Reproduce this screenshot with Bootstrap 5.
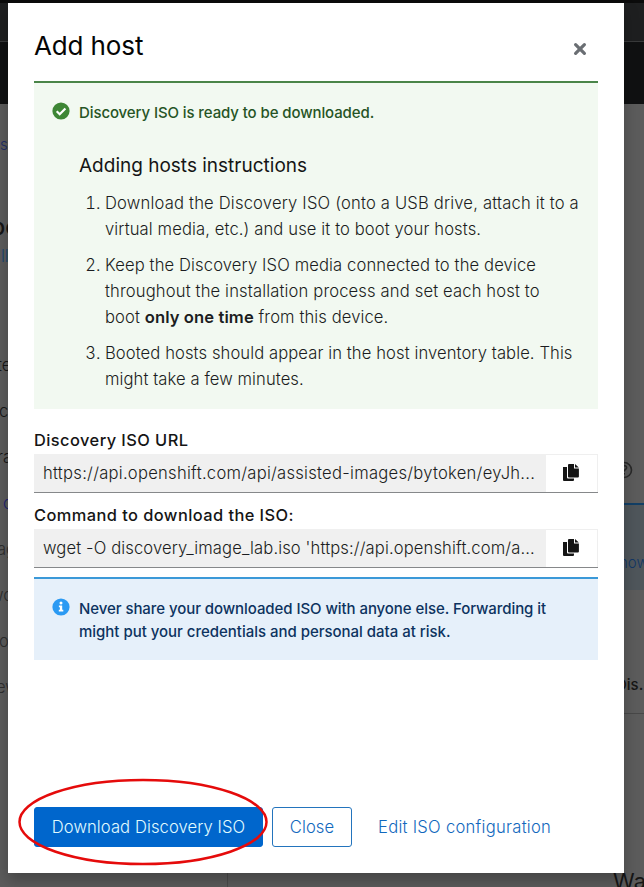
<!DOCTYPE html>
<html lang="en">
<head>
<meta charset="utf-8">
<meta name="viewport" content="width=device-width, initial-scale=1">
<title>Add host</title>
<link href="https://cdn.jsdelivr.net/npm/bootstrap@5.3.0/dist/css/bootstrap.min.css" rel="stylesheet">
<style>
body{font-family:Inter,"Liberation Sans",sans-serif;font-size:16.6px;line-height:26px;font-weight:350;color:#1b1d21;background:#5c5c5c;width:644px;height:887px;overflow:hidden}
.page{height:887px;color:#161616}
.masthead{height:104px;background:#101112;border-top:3px solid #0b0b0b}
.masthead-bar{height:39px;background:#1e1f20;border-bottom:1px solid #393a3b}
.page-body{height:769px}
.rail{width:24px;overflow:hidden;white-space:nowrap}
.rail div{height:46px;line-height:46px;margin-left:-3px}
.rail .crumb{margin-top:18px;font-size:15px;margin-left:0;color:#1d2c66}
.rail .heading{margin-top:36px;font-size:23px;font-weight:550;margin-left:-9px}
.rail .tab-link{height:26px;line-height:26px;margin:-7px 0 73px 1px;color:#174672}
.rail .single{margin-left:-1px}
.rail .entry-link{margin-left:3px;color:#1f2470}
.rail .dim{color:#2e2e2e}
.rail .dim.wide{margin-left:-10px}
.rail .dim.ew{margin-left:-4px}
.aside{width:20px;overflow:hidden;white-space:nowrap}
.help-icon{display:block;margin:357px 0 0 -9px}
.notice{margin-top:24px;height:87px;border-top:2px solid #123f66;background:#4f565b;color:#123766;line-height:24px;padding-top:46px;font-size:15px}
.notice span{margin-left:-5px}
.col-title{margin-top:83px;height:41px;line-height:24px;border-bottom:1px solid #484848;font-weight:550;font-size:15px}
.col-title span{margin-left:-8px}
.status-row{height:14px;overflow:hidden}
.status-cell{width:228px;border-right:1px solid #4b4b4b}
.status-word{font-size:22px;line-height:16px;font-weight:400;margin-right:-2px}
.host-modal{left:8px;top:3px;width:616px;height:870px;background:#fff;padding:0 26px 26px;box-shadow:0 8px 14px rgba(0,0,0,.25)}
.modal-top{height:78px;padding:7px 11px 0 0}
.modal-top h1{font-size:26px;line-height:68px;font-weight:400;letter-spacing:-.12px;color:#050505}
.close-x{margin-top:7px}
.note{border-top:2px solid;padding-left:18px}
.note-ok{height:328px;background:#f2f9f1;border-color:#4a8549}
.note-info{height:83px;margin-top:9px;background:#e6f0fa;border-color:#3b99d8}
.note-icon{flex:none;width:18px;height:18px;margin:19px 9px 0 0}
.note-title{font-size:15px;font-weight:550;line-height:23px;margin-top:18px}
.note-ok .note-title{color:#265425}
.note-info .note-title{color:#0d3360}
.note-ok h2{font-size:19px;line-height:26px;margin:29px 0 11px;font-weight:400;color:#151515}
.steps{padding-left:26px}
.steps li{margin-bottom:10px}
.steps b{font-weight:600}
.ln{display:block;white-space:nowrap}
.t1{letter-spacing:-.1px}
.l1{letter-spacing:.18px}
.l2{letter-spacing:.11px}
.l3{letter-spacing:.12px}
.l4{letter-spacing:.14px}
.l5,.l6{letter-spacing:.09px}
.l7{letter-spacing:.08px}
.c1{letter-spacing:.26px}
.c2{letter-spacing:.12px}
.n1{letter-spacing:-.07px}
.n2{letter-spacing:-.02px}
.b1,.b2{letter-spacing:.08px}
.b3{letter-spacing:.27px}
.field-label{font-weight:550;font-size:16.4px;letter-spacing:.44px;line-height:24px;color:#151515;margin:10px 0 2px}
.note + .field-label{margin-top:19px}
.copy-row{height:39px;border-bottom:1px solid #86888a}
.copy-text{width:512px;background:#f0f0f0;padding-left:9px;line-height:38px;white-space:nowrap}
.copy-btn{width:52px;border:1px solid #efefef;border-width:1px 1px 0 0;padding:0 1px 2px 0}
.foot-btn{height:40px;border-radius:3px;padding:0;font-size:16.6px;font-weight:350;line-height:38px;border:1px solid #06c;color:#1168bd}
.foot-main{width:229px;background:#06c;color:#e0fbff}
.foot-close{width:80px;border-color:#2374bd;margin-left:9px}
.foot-edit{border-color:transparent;margin-left:25px}
.ring{left:17px;top:777px}
</style>
<script src="https://cdn.jsdelivr.net/npm/bootstrap@5.3.0/dist/js/bootstrap.bundle.min.js"></script>
</head>
<body class="position-relative">
<div class="page d-flex flex-column" aria-hidden="true">
  <div class="masthead flex-shrink-0"><div class="masthead-bar"></div></div>
  <div class="page-body d-flex justify-content-between flex-shrink-0">
    <div class="rail">
      <div class="crumb">s</div>
      <div class="heading">po</div>
      <div class="tab-link">ll</div>
      <div>te</div><div class="single">c</div><div>ra</div><div class="entry-link">c</div>
      <div class="dim">ag</div><div class="dim wide">wo</div><div class="dim single">o</div><div class="dim ew">ew</div>
    </div>
    <div class="aside">
      <svg class="help-icon" width="18" height="18" viewBox="0 0 18 18" fill="none" stroke="#292929" stroke-width="1.6"><circle cx="9" cy="9" r="7.5"/><path d="M6.5 7q.2-2.4 2.6-2.4t2.5 2.2c0 1.7-2.4 1.6-2.4 3.6M9.2 12v1.6"/></svg>
      <div class="notice"><span>now</span></div>
      <div class="col-title"><span>Dis.</span></div>
    </div>
  </div>
  <div class="status-row d-flex justify-content-between">
    <div class="status-cell"></div><div class="status-word">Wa</div>
  </div>
</div>

<main class="host-modal position-absolute d-flex flex-column" role="dialog" aria-label="Add host">
  <div class="modal-top d-flex justify-content-between align-items-center flex-shrink-0">
    <h1 class="m-0">Add host</h1>
    <svg class="close-x" width="14" height="14" viewBox="0 0 14 14" stroke="#6a6e73" stroke-width="3.2" stroke-linecap="round"><path d="M2.6 2.6l8.8 8.8M11.4 2.6l-8.8 8.8"/></svg>
  </div>
  <section class="note note-ok d-flex flex-shrink-0">
    <svg class="note-icon" viewBox="0 0 18 18"><circle cx="9" cy="9" r="8.6" fill="#3e8635"/><path d="M4.7 9.2l3 3 5.7-5.8" fill="none" stroke="#fff" stroke-width="2.2"/></svg>
    <div>
      <div class="note-title"><span class="ln t1">Discovery ISO is ready to be downloaded.</span></div>
      <h2 class="ln">Adding hosts instructions</h2>
      <ol class="steps m-0">
        <li><span class="ln l1">Download the Discovery ISO (onto a USB drive, attach it to a</span><span class="ln l2">virtual media, etc.) and use it to boot your hosts.</span></li>
        <li><span class="ln l3">Keep the Discovery ISO media connected to the device</span><span class="ln l4">throughout the installation process and set each host to</span><span class="ln l5">boot <b>only one time</b> from this device.</span></li>
        <li><span class="ln l6">Booted hosts should appear in the host inventory table. This</span><span class="ln l7">might take a few minutes.</span></li>
      </ol>
    </div>
  </section>
  <div class="field-label">Discovery ISO URL</div>
  <div class="copy-row d-flex flex-shrink-0">
    <div class="copy-text"><span class="c1">https://api.openshift.com/api/assisted-images/bytoken/eyJh...</span></div>
    <div class="copy-btn d-flex align-items-center justify-content-center"><svg width="18" height="19" viewBox="0 0 18 19" fill="#151515"><path d="M1 4h4v10.5q0 1 1 1h6V17q0 1-1 1H2q-1 0-1-1z"/><path d="M6 2q0-1 1-1h5v4.4h4.9v8.1q0 1-1 1H7q-1 0-1-1zM13 1l3.8 3.4H13z"/></svg></div>
  </div>
  <div class="field-label">Command to download the ISO:</div>
  <div class="copy-row d-flex flex-shrink-0">
    <div class="copy-text"><span class="c2">wget -O discovery_image_lab.iso 'https://api.openshift.com/a...</span></div>
    <div class="copy-btn d-flex align-items-center justify-content-center"><svg width="18" height="19" viewBox="0 0 18 19" fill="#151515"><path d="M1 4h4v10.5q0 1 1 1h6V17q0 1-1 1H2q-1 0-1-1z"/><path d="M6 2q0-1 1-1h5v4.4h4.9v8.1q0 1-1 1H7q-1 0-1-1zM13 1l3.8 3.4H13z"/></svg></div>
  </div>
  <section class="note note-info d-flex flex-shrink-0">
    <svg class="note-icon" viewBox="0 0 18 18"><circle cx="9" cy="9" r="8.6" fill="#2b9af3"/><circle cx="9" cy="5" r="1.5" fill="#fff"/><path d="M6.9 7.5h3.3v4.2h1.1v1.7H6.8v-1.7h1.1V9.2h-1z" fill="#fff"/></svg>
    <div class="note-title"><span class="ln n1">Never share your downloaded ISO with anyone else. Forwarding it</span><span class="ln n2">might put your credentials and personal data at risk.</span></div>
  </section>
  <div class="d-flex mt-auto">
    <button class="btn foot-btn foot-main"><span class="b1">Download Discovery ISO</span></button>
    <button class="btn foot-btn foot-close"><span class="b2">Close</span></button>
    <button class="btn foot-btn foot-edit"><span class="b3">Edit ISO configuration</span></button>
  </div>
</main>
<svg class="ring position-absolute" width="252" height="90" viewBox="0 0 252 90" fill="none"><ellipse cx="126" cy="45" rx="123.5" ry="42" stroke="#e50b0b" stroke-width="2.5"/></svg>
</body>
</html>
